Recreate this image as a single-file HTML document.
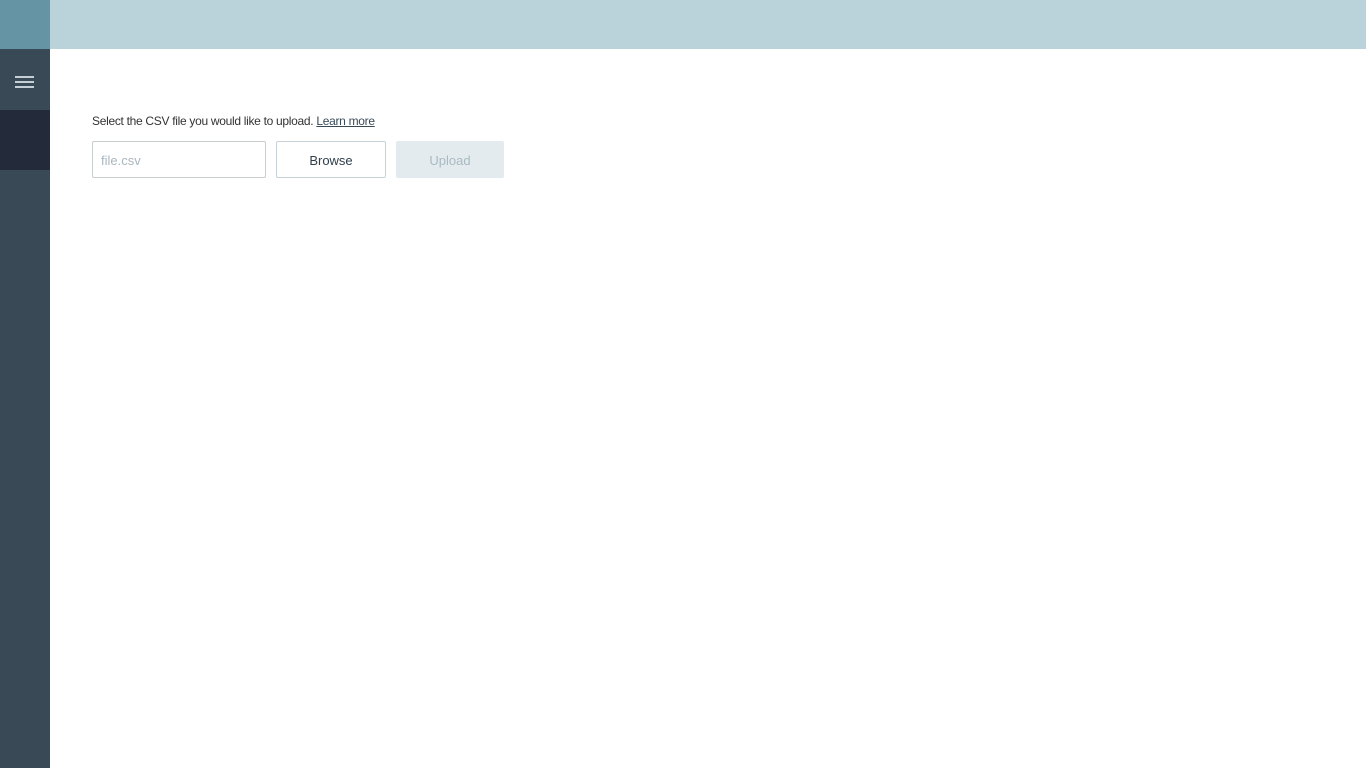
<!DOCTYPE html>
<html><head><meta charset="utf-8"><style>
*{margin:0;padding:0;box-sizing:border-box}
body{width:1366px;height:768px;position:relative;background:#fff;font-family:"Liberation Sans",sans-serif;overflow:hidden}
.side{position:absolute;left:0;top:0;width:50px;height:768px;background:#394a56}
.logo{position:absolute;left:0;top:0;width:50px;height:49px;background:#6595a5}
.act{position:absolute;left:0;top:110px;width:50px;height:60px;background:#232a39}
.ham{position:absolute;left:15px;top:76px;width:19px}
.ham i{display:block;height:1.5px;background:#c5d0d6;margin-bottom:3.5px}
.top{position:absolute;left:50px;top:0;right:0;height:49px;background:#bad3da}
.txt{position:absolute;left:92px;top:114px;font-size:12px;color:#333;letter-spacing:-0.3px}
.txt u{color:#394a56}
.box{position:absolute;top:141px;height:37px;border:1px solid #c8cdd0;border-radius:2px;font-size:13px;line-height:37px}
</style></head><body>
<div class="side"></div><div class="logo"></div><div class="act"></div>
<div class="ham"><i></i><i></i><i></i></div>
<div class="top"></div>
<div class="txt">Select the CSV file you would like to upload. <u>Learn more</u></div>
<div class="box" style="left:92px;width:174px;padding-left:8px;color:#aab7bf">file.csv</div>
<div class="box" style="left:276px;width:110px;text-align:center;color:#2f3e4a;border-color:#c5d3d9">Browse</div>
<div class="box" style="left:396px;width:108px;text-align:center;color:#a9bac2;background:#e3ebee;border-color:#e3ebee">Upload</div>
</body></html>
